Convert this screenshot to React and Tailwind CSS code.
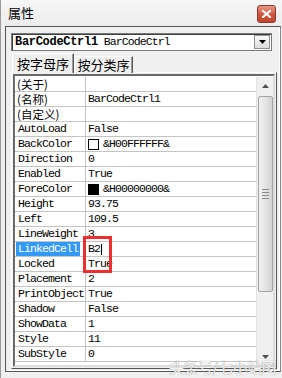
import React from 'react'

const rows = [
  { name: '(关于)', value: '', cjk: true },
  { name: '(名称)', value: 'BarCodeCtrl1', cjk: true },
  { name: '(自定义)', value: '', cjk: true },
  { name: 'AutoLoad', value: 'False' },
  { name: 'BackColor', value: '&H00FFFFFF&', swatch: 'bg-white' },
  { name: 'Direction', value: '0' },
  { name: 'Enabled', value: 'True' },
  { name: 'ForeColor', value: '&H00000000&', swatch: 'bg-black' },
  { name: 'Height', value: '93.75' },
  { name: 'Left', value: '109.5' },
  { name: 'LineWeight', value: '3' },
  { name: 'LinkedCell', value: 'B2', selected: true },
  { name: 'Locked', value: 'True' },
  { name: 'Placement', value: '2' },
  { name: 'PrintObject', value: 'True' },
  { name: 'Shadow', value: 'False' },
  { name: 'ShowData', value: '1' },
  { name: 'Style', value: '11' },
  { name: 'SubStyle', value: '0' },
]

const mono = "font-['Liberation_Mono',monospace] text-[11.5px] leading-[14px] tracking-[-0.9px]"
const cjk = "font-['Noto_Sans_CJK_SC','Noto_Sans',sans-serif]"

function Row({ row }) {
  return (
    <div className="flex h-[15px] border-b border-[#c4c4c4]">
      <div className="w-[71px] border-r border-[#c4c4c4] flex items-center pl-[1px] shrink-0">
        {row.selected ? (
          <span className={`${mono} h-full flex items-center bg-[#3399ff] text-white pl-[2px] pr-[2px]`}>{row.name}</span>
        ) : (
          <span className={row.cjk ? `${cjk} text-[11.5px] leading-[13px] pl-[1px]` : `${mono} pl-[2px] text-black`}>{row.name}</span>
        )}
      </div>
      <div className={`flex-1 flex items-center pl-[2px] ${mono}`}>
        {row.swatch && <span className={`w-[11px] h-[11px] border border-black mr-[4px] ${row.swatch}`} />}
        {row.selected ? (
          <span className="flex items-center bg-white">
            B2<span className="w-px h-[11px] bg-black ml-[1px]" />
          </span>
        ) : (
          row.value
        )}
      </div>
    </div>
  )
}

function ScrollBar() {
  return (
    <div className="w-[17px] shrink-0 bg-[#f0f0f0] border-l border-[#e2e2e2] flex flex-col items-center">
      <div className="h-[17px] w-full flex items-center justify-center">
        <svg width="7" height="4" viewBox="0 0 7 4"><path d="M3.5 0 L7 4 L0 4 Z" fill="#505050" /></svg>
      </div>
      <div className="w-[15px] h-[196px] mt-[2px] rounded-[2px] border border-[#a2a2a2] bg-gradient-to-r from-[#f1f1f1] via-[#e4e4e4] to-[#d3d3d3] flex flex-col items-center justify-center gap-[2px]">
        <span className="w-[7px] h-px bg-[#8c8c8c]" />
        <span className="w-[7px] h-px bg-[#8c8c8c]" />
        <span className="w-[7px] h-px bg-[#8c8c8c]" />
        <span className="w-[7px] h-px bg-[#8c8c8c]" />
      </div>
      <div className="flex-1" />
      <div className="h-[17px] w-full flex items-center justify-center">
        <svg width="7" height="4" viewBox="0 0 7 4"><path d="M0 0 L7 0 L3.5 4 Z" fill="#505050" /></svg>
      </div>
    </div>
  )
}

export default function App() {
  return (
    <div className="relative w-[282px] h-[378px] overflow-hidden bg-[#f0f0f0] border-l border-[#9a9a9a] flex flex-col">
      {/* title bar */}
      <div className="h-[26px] shrink-0 flex items-center justify-between pl-[7px] pr-[6px] bg-gradient-to-b from-[#f7f7f7] to-[#ececec]">
        <span className={`${cjk} text-[13px] text-black`}>属性</span>
        <div className="w-[19px] h-[18px] mt-[2px] rounded-[3px] border border-[#8a3a2e] bg-gradient-to-b from-[#e69a88] via-[#cf5a42] to-[#c2442c] flex items-center justify-center">
          <svg width="9" height="8" viewBox="0 0 9 8">
            <path d="M1 1 L8 7 M8 1 L1 7" stroke="#fff" strokeWidth="2.2" strokeLinecap="square" />
          </svg>
        </div>
      </div>

      {/* body */}
      <div className="flex-1 flex pl-[4px] pr-[1px] pb-[6px]">
        <div className="flex-1 border border-[#555] border-r-[#888] flex flex-col pt-[6px] pl-[5px] pr-[3px] pb-[2px] shadow-[inset_-1px_-1px_0_#fff]">
          {/* object dropdown */}
          <div className="h-[18px] w-[261px] bg-white border border-[#7a7a7a] shadow-[inset_1px_1px_0_#404040] flex items-center pl-[3px] pr-[1px]">
            <span className="font-['Liberation_Mono',monospace] text-[12px] font-bold tracking-[-0.3px] text-black">BarCodeCtrl1</span>
            <span className={`${mono} ml-[6px] text-black`}>BarCodeCtrl</span>
            <div className="ml-auto w-[16px] h-[14px] border border-[#909090] bg-gradient-to-b from-[#fafafa] to-[#dcdcdc] flex items-center justify-center">
              <svg width="7" height="4" viewBox="0 0 7 4"><path d="M0 0 L7 0 L3.5 4 Z" fill="#000" /></svg>
            </div>
          </div>

          {/* tabs */}
          <div className="flex items-end h-[20px] mt-[2px] pl-[1px] relative z-10">
            <div className={`${cjk} w-[62px] h-[20px] border border-b-0 border-[#fff] border-r-[#555] shadow-[inset_-1px_0_0_#a0a0a0] bg-[#f0f0f0] text-[13px] leading-[16px] flex items-center justify-center`}>
              按字母序
            </div>
            <div className={`${cjk} w-[59px] h-[17px] border border-b-0 border-[#fff] border-r-[#555] shadow-[inset_-1px_0_0_#a0a0a0] bg-[#f0f0f0] text-[13px] leading-[16px] flex items-center justify-center`}>
              按分类序
            </div>
          </div>

          {/* tab page */}
          <div className="flex-1 -mt-px border border-t-white border-l-white border-r-[#555] border-b-[#555] p-[1px] flex">
            <div className="flex-1 border-2 border-t-[#6a6a6a] border-l-[#6a6a6a] border-r-[#dcdcdc] border-b-[#dcdcdc] bg-white flex relative pt-[1px]">
              <div className="flex-1 flex flex-col overflow-hidden">
                {rows.map((r) => (
                  <Row key={r.name} row={r} />
                ))}
              </div>
              <ScrollBar />
            </div>
          </div>
        </div>
      </div>

      {/* red annotation box */}
      <div className="absolute left-[82px] top-[236px] w-[29px] h-[37px] border-[3px] border-[#ec2f2f]" />

      {/* watermark */}
      <div className={`${cjk} absolute right-[6px] bottom-[3px] text-[15px] leading-[16px] text-[#f4f4f4] [text-shadow:0_0_1px_#777] tracking-[-0.5px]`}>
        头条号/七小站图
      </div>
    </div>
  )
}
